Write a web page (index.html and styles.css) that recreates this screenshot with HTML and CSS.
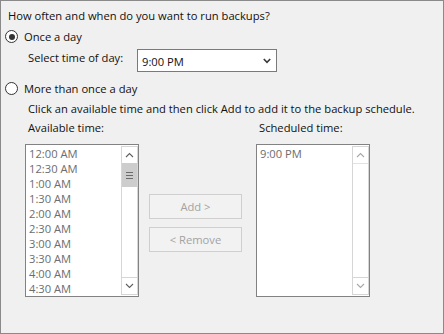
FILE: index.html
```html
<!DOCTYPE html>
<html>
<head>
<meta charset="utf-8">
<link rel="stylesheet" href="styles.css">
</head>
<body>
<div class="frame">
  <div class="heading">How often and when do you want to run backups?</div>

  <div class="radio-row first">
    <span class="radio checked"></span>
    <span class="radio-label">Once a day</span>
  </div>

  <div class="select-row">
    <span class="select-label">Select time of day:</span>
    <div class="dropdown">
      <span class="dropdown-value">9:00 PM</span>
      <svg class="dropdown-chevron" width="8" height="6" viewBox="0 0 8 6"><polyline points="0.8,1 4,4.4 7.2,1" fill="none" stroke="#3a3a3a" stroke-width="1.6"/></svg>
    </div>
  </div>

  <div class="radio-row second">
    <span class="radio"></span>
    <span class="radio-label">More than once a day</span>
  </div>

  <div class="instruction">Click an available time and then click Add to add it to the backup schedule.</div>

  <div class="lists">
    <div class="col col-avail">
      <div class="col-label">Available time:</div>
      <div class="listbox">
        <div class="items">
          <div class="item">12:00 AM</div>
          <div class="item">12:30 AM</div>
          <div class="item">1:00 AM</div>
          <div class="item">1:30 AM</div>
          <div class="item">2:00 AM</div>
          <div class="item">2:30 AM</div>
          <div class="item">3:00 AM</div>
          <div class="item">3:30 AM</div>
          <div class="item">4:00 AM</div>
          <div class="item">4:30 AM</div>
        </div>
        <div class="scrollbar">
          <div class="arrow up">
            <svg width="9" height="6" viewBox="0 0 9 6"><polyline points="1,5 4.5,1.5 8,5" fill="none" stroke="#5f5f5f" stroke-width="1.1"/></svg>
          </div>
          <div class="thumb"><span></span><span></span><span></span></div>
          <div class="track"></div>
          <div class="arrow down">
            <svg width="9" height="6" viewBox="0 0 9 6"><polyline points="1,1 4.5,4.5 8,1" fill="none" stroke="#5f5f5f" stroke-width="1.1"/></svg>
          </div>
        </div>
      </div>
    </div>

    <div class="col col-buttons">
      <div class="btn">Add &gt;</div>
      <div class="btn">&lt; Remove</div>
    </div>

    <div class="col col-sched">
      <div class="col-label">Scheduled time:</div>
      <div class="listbox">
        <div class="items">
          <div class="item">9:00 PM</div>
        </div>
        <div class="scrollbar disabled">
          <div class="arrow up">
            <svg width="9" height="6" viewBox="0 0 9 6"><polyline points="1,5 4.5,1.5 8,5" fill="none" stroke="#a8a8a8" stroke-width="1.1"/></svg>
          </div>
          <div class="track"></div>
          <div class="arrow down">
            <svg width="9" height="6" viewBox="0 0 9 6"><polyline points="1,1 4.5,4.5 8,1" fill="none" stroke="#a8a8a8" stroke-width="1.1"/></svg>
          </div>
        </div>
      </div>
    </div>
  </div>
</div>
</body>
</html>
```

FILE: styles.css
```css
html, body {
  margin: 0;
  padding: 0;
  background: #f0f0f0;
}

.frame {
  width: 444px;
  height: 334px;
  box-sizing: border-box;
  border: 1px solid #8a8a8a;
  background: #f0f0f0;
  padding: 7px 0 0 4px;
  font-family: "Open Sans", "Noto Sans", sans-serif;
  font-size: 11.2px;
  line-height: 15px;
  color: #111;
}

.heading {
  height: 15px;
  padding-left: 3px;
  white-space: nowrap;
}

.radio-row {
  display: flex;
  align-items: center;
  height: 15px;
}

.radio-row.first {
  margin-top: 6px;
}

.radio-row.second {
  margin-top: 9px;
}

.radio {
  width: 13px;
  height: 13px;
  box-sizing: border-box;
  border: 1px solid #333;
  border-radius: 50%;
  background: #fff;
  display: flex;
  align-items: center;
  justify-content: center;
}

.radio.checked::after {
  content: "";
  width: 6px;
  height: 6px;
  border-radius: 50%;
  background: #333;
}

.radio-label {
  margin-left: 6px;
  white-space: nowrap;
}

.select-row {
  display: flex;
  align-items: flex-start;
  margin-top: 5px;
  margin-left: 23px;
}

.select-label {
  width: 109px;
  margin-top: 1px;
  white-space: nowrap;
}

.dropdown {
  width: 140px;
  height: 23px;
  box-sizing: border-box;
  border: 1px solid #7a7a7a;
  background: #fff;
  display: flex;
  align-items: center;
  justify-content: space-between;
  padding: 1px 5px 0 4px;
}

.dropdown-chevron {
  display: block;
}

.instruction {
  margin-top: 5px;
  margin-left: 23px;
  white-space: nowrap;
}

.lists {
  display: flex;
  align-items: flex-start;
  margin-top: 4px;
  margin-left: 20px;
}

.col-avail,
.col-sched {
  width: 114px;
}

.col-sched {
  margin-left: 14px;
}

.col-label {
  height: 15px;
  margin-bottom: 9px;
  padding-left: 3px;
  white-space: nowrap;
}

.listbox {
  height: 153px;
  box-sizing: border-box;
  border: 1px solid #828282;
  background: #fff;
  display: flex;
}

.items {
  flex: 1;
  padding: 1px 0 0 3px;
  color: #6d6d6d;
}

.item {
  height: 15px;
  white-space: nowrap;
}

.scrollbar {
  width: 17px;
  margin: 1px 0 1px 0;
  box-sizing: border-box;
  border: 1px solid #d6d6d6;
  display: flex;
  flex-direction: column;
}

.arrow {
  height: 16px;
  display: flex;
  align-items: center;
  justify-content: center;
}

.arrow svg {
  display: block;
}

.arrow.down {
  border-top: 1px solid #d6d6d6;
}

.scrollbar.disabled .arrow.up {
  border-bottom: 1px solid #e2e2e2;
}

.thumb {
  height: 24px;
  background: #cdcdcd;
  display: flex;
  flex-direction: column;
  align-items: center;
  justify-content: center;
  gap: 2px;
}

.thumb span {
  width: 7px;
  height: 1px;
  background: #6a6a6a;
}

.track {
  flex: 1;
}

.col-buttons {
  width: 93px;
  margin-left: 10px;
  margin-top: 74px;
  display: flex;
  flex-direction: column;
  gap: 8px;
}

.btn {
  height: 25px;
  box-sizing: border-box;
  border: 1px solid #cfcfcf;
  background: #f2f2f2;
  color: #a3a3a3;
  display: flex;
  align-items: center;
  justify-content: center;
  white-space: nowrap;
}
```
